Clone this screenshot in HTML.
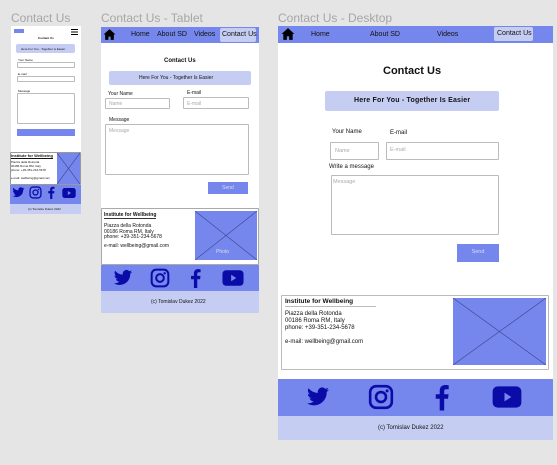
<!DOCTYPE html>
<html><head><meta charset="utf-8"><style>
*{margin:0;padding:0;box-sizing:border-box}
body{width:557px;height:465px;background:#e5e5e5;position:relative;overflow:hidden;font-family:"Liberation Sans",sans-serif;color:#111}
.a{position:absolute}
.w{background:#fff}
.blue{background:#7587ec}
.lb{background:#c6cdf3}
.t{white-space:nowrap}
.box{border:1px solid #bbb;background:#fff;border-radius:1px}
.ph{color:#aaa}
svg{position:absolute}
</style></head><body>
<svg width="0" height="0" style="position:absolute">
<symbol id="tw" viewBox="0 0 24 24"><path fill="#0b0ba8" d="M23 4.6c-.8.4-1.7.6-2.6.7.9-.6 1.6-1.4 2-2.5-.9.5-1.9.9-2.9 1.1A4.5 4.5 0 0 0 11.8 8 12.8 12.8 0 0 1 2.5 3.3a4.5 4.5 0 0 0 1.4 6 4.4 4.4 0 0 1-2-.6 4.5 4.5 0 0 0 3.6 4.5 4.5 4.5 0 0 1-2 .1 4.5 4.5 0 0 0 4.2 3.1A9 9 0 0 1 1 18.3a12.8 12.8 0 0 0 19.7-11.4c.9-.6 1.7-1.4 2.3-2.3z"/></symbol>
<symbol id="ig" viewBox="0 0 24 24"><rect x="2" y="2" width="20" height="20" rx="5.5" fill="none" stroke="#0b0ba8" stroke-width="2.4"/><circle cx="12" cy="12" r="4.6" fill="none" stroke="#0b0ba8" stroke-width="2.4"/><circle cx="17.6" cy="6.4" r="1.4" fill="#0b0ba8"/></symbol>
<symbol id="fb" viewBox="0 0 24 24"><path fill="#0b0ba8" d="M13.5 24V13.5h3.4l.5-4h-3.9V7c0-1.1.3-1.9 1.9-1.9h2.1V1.5c-.4 0-1.6-.2-3-.2-3 0-5 1.8-5 5.2v3H6v4h3.5V24z"/></symbol>
<symbol id="yt" viewBox="0 0 24 24"><rect x="0.5" y="3.5" width="23" height="17" rx="4" fill="#0b0ba8"/><path d="M10 8.5v7l5.5-3.5z" fill="#7587ec"/></symbol>
<symbol id="hm" viewBox="0 0 24 24"><path fill="#000" d="M12 2 1 12h3v10h6v-6h4v6h6V12h3z"/></symbol>
<symbol id="x" viewBox="0 0 100 100" preserveAspectRatio="none"><rect width="100" height="100" fill="#7587ec"/><path d="M0 0 100 100M100 0 0 100" stroke="#3a4390" stroke-width="0.6" vector-effect="non-scaling-stroke"/></symbol>
</svg>

<!-- Titles -->
<div class="a t" style="left:11px;top:11px;font-size:12px;color:#a6a6a6">Contact Us</div>
<div class="a t" style="left:101px;top:11px;font-size:12px;color:#a6a6a6">Contact Us - Tablet</div>
<div class="a t" style="left:278px;top:11px;font-size:12px;color:#a6a6a6">Contact Us - Desktop</div>

<!-- MOBILE -->
<div class="a w" style="left:11px;top:26px;width:70px;height:126px"></div>
<div class="a" style="left:14px;top:29px;width:10px;height:4px;background:#7587ec"></div>
<div class="a" style="left:71px;top:29px;width:7px;height:1px;background:#000;box-shadow:0 2.5px 0 #000,0 5px 0 #000"></div>
<div class="a t" style="left:38px;top:36px;font-size:3px;font-weight:bold">Contact Us</div>
<div class="a lb" style="left:16px;top:44px;width:59px;height:9px;border-radius:2px"></div>
<div class="a t" style="left:21px;top:47px;font-size:3px">Here For You - Together is Easier</div>
<div class="a t" style="left:18px;top:58px;font-size:3px">Your Name</div>
<div class="a box" style="left:17px;top:62px;width:58px;height:6px"></div>
<div class="a t" style="left:18px;top:72px;font-size:3px">E-mail</div>
<div class="a box" style="left:17px;top:76px;width:58px;height:6px"></div>
<div class="a t" style="left:18px;top:89px;font-size:3px">Message</div>
<div class="a box" style="left:17px;top:93px;width:58px;height:31px"></div>
<div class="a blue" style="left:17px;top:129px;width:58px;height:7px"></div>
<div class="a box" style="left:10px;top:152px;width:71px;height:33px;border-color:#999"></div>
<div class="a t" style="left:11px;top:153px;font-size:4px;font-weight:bold;text-decoration:underline">Institute for Wellbeing</div>
<div class="a" style="left:11px;top:160px;font-size:3px;line-height:4px">Piazza della Rotonda<br>00186 Roma RM, Italy<br>phone: +39-351-234-5678<br><br>e-mail: wellbeing@gmail.com</div>
<svg style="left:57px;top:153px" width="23" height="31"><use href="#x"/></svg>
<div class="a blue" style="left:10px;top:185px;width:71px;height:19px"></div>
<svg style="left:12px;top:186px" width="13" height="13"><use href="#tw"/></svg>
<svg style="left:29px;top:186px" width="13" height="13"><use href="#ig"/></svg>
<svg style="left:45px;top:186px" width="13" height="13"><use href="#fb"/></svg>
<svg style="left:62px;top:186px" width="14" height="14"><use href="#yt"/></svg>
<div class="a lb" style="left:10px;top:204px;width:71px;height:10px"></div>
<div class="a t" style="left:28px;top:207px;font-size:3px">(c) Tomislav Dukez 2022</div>

<!-- TABLET -->
<div class="a w" style="left:101px;top:27px;width:158px;height:181px"></div>
<div class="a blue" style="left:101px;top:27px;width:158px;height:16px"></div>
<svg style="left:103px;top:28px" width="13" height="13"><use href="#hm"/></svg>
<div class="a t" style="left:131px;top:31px;font-size:7px">Home</div>
<div class="a t" style="left:157px;top:31px;font-size:7px">About SD</div>
<div class="a t" style="left:194px;top:31px;font-size:7px">Videos</div>
<div class="a lb t" style="left:220px;top:28px;width:36px;height:14px;font-size:7px;padding:3px 0 0 2px;border-radius:2px">Contact Us</div>
<div class="a t" style="left:164px;top:58px;font-size:6px;font-weight:bold">Contact Us</div>
<div class="a lb" style="left:109px;top:71px;width:142px;height:14px;border-radius:2px"></div>
<div class="a t" style="left:139px;top:75px;font-size:5px">Here For You - Together Is Easier</div>
<div class="a t" style="left:108px;top:91px;font-size:5px">Your Name</div>
<div class="a t" style="left:187px;top:90px;font-size:5px">E-mail</div>
<div class="a box ph" style="left:105px;top:98px;width:65px;height:11px;font-size:5px;padding:2px 3px">Name</div>
<div class="a box ph" style="left:183px;top:97px;width:66px;height:12px;font-size:5px;padding:3px 3px">E-mail</div>
<div class="a t" style="left:109px;top:117px;font-size:5px">Message</div>
<div class="a box ph" style="left:105px;top:124px;width:144px;height:51px;font-size:5px;padding:3px">Message</div>
<div class="a blue t" style="left:208px;top:182px;width:40px;height:12px;font-size:5px;color:#dde;text-align:center;padding-top:3px">Send</div>
<div class="a box" style="left:101px;top:208px;width:158px;height:57px;border-color:#aaa"></div>
<div class="a t" style="left:104px;top:212px;font-size:5px;font-weight:bold;border-bottom:1px solid #333">Institute for Wellbeing</div>
<div class="a t" style="left:104px;top:224px;font-size:5px;line-height:5.5px">Piazza della Rotonda<br>00186 Roma RM, Italy<br>phone: +39-351-234-5678</div>
<div class="a t" style="left:104px;top:243px;font-size:5px">e-mail: wellbeing@gmail.com</div>
<svg style="left:195px;top:211px" width="62" height="49"><use href="#x"/></svg>
<div class="a t" style="left:216px;top:249px;font-size:5px;color:#dde">Photo</div>
<div class="a blue" style="left:101px;top:265px;width:158px;height:26px"></div>
<svg style="left:113px;top:268px" width="20" height="20"><use href="#tw"/></svg>
<svg style="left:150px;top:268px" width="20" height="20"><use href="#ig"/></svg>
<svg style="left:186px;top:268px" width="20" height="20"><use href="#fb"/></svg>
<svg style="left:222px;top:267px" width="22" height="22"><use href="#yt"/></svg>
<div class="a lb" style="left:101px;top:291px;width:158px;height:22px"></div>
<div class="a t" style="left:151px;top:299px;font-size:5px">(c) Tomislav Dukez 2022</div>

<!-- DESKTOP -->
<div class="a w" style="left:278px;top:26px;width:275px;height:354px"></div>
<div class="a blue" style="left:278px;top:26px;width:275px;height:17px"></div>
<svg style="left:281px;top:27px" width="14" height="14"><use href="#hm"/></svg>
<div class="a t" style="left:311px;top:31px;font-size:7px">Home</div>
<div class="a t" style="left:370px;top:31px;font-size:7px">About SD</div>
<div class="a t" style="left:437px;top:31px;font-size:7px">Videos</div>
<div class="a lb t" style="left:494px;top:27px;width:39px;height:14px;font-size:7px;padding:3px 0 0 3px;border-radius:2px">Contact Us</div>
<div class="a t" style="left:383px;top:65px;font-size:11px;font-weight:bold">Contact Us</div>
<div class="a lb" style="left:325px;top:91px;width:174px;height:20px;border-radius:2px"></div>
<div class="a t" style="left:354px;top:97px;font-size:7px;font-weight:bold;letter-spacing:0.2px">Here For You - Together Is Easier</div>
<div class="a t" style="left:332px;top:129px;font-size:6px">Your Name</div>
<div class="a t" style="left:390px;top:130px;font-size:6px">E-mail</div>
<div class="a box ph" style="left:330px;top:142px;width:49px;height:18px;font-size:5.5px;padding:5px 4px">Name</div>
<div class="a box ph" style="left:386px;top:142px;width:113px;height:18px;font-size:5.5px;padding:4px 3px">E-mail</div>
<div class="a t" style="left:329px;top:164px;font-size:6px">Write a message</div>
<div class="a box ph" style="left:331px;top:175px;width:168px;height:60px;font-size:5.5px;padding:3px 1px">Message</div>
<div class="a blue t" style="left:457px;top:244px;width:42px;height:18px;font-size:5.5px;color:#dde;text-align:center;padding-top:5px">Send</div>
<div class="a box" style="left:281px;top:295px;width:268px;height:75px;border-color:#bbb"></div>
<div class="a t" style="left:285px;top:298px;font-size:6.5px;font-weight:bold;border-bottom:1px solid #bbb;padding-bottom:1px;width:91px">Institute for Wellbeing</div>
<div class="a t" style="left:285px;top:311px;font-size:6px;line-height:7px">Piazza della Rotonda<br>00186 Roma RM, Italy<br>phone: +39-351-234-5678</div>
<div class="a t" style="left:285px;top:339px;font-size:6px">e-mail: wellbeing@gmail.com</div>
<svg style="left:453px;top:298px" width="93" height="67"><use href="#x"/></svg>
<div class="a blue" style="left:278px;top:379px;width:275px;height:37px"></div>
<svg style="left:306px;top:385px" width="24" height="24"><use href="#tw"/></svg>
<svg style="left:368px;top:384px" width="26" height="26"><use href="#ig"/></svg>
<svg style="left:429px;top:383px" width="27" height="28"><use href="#fb"/></svg>
<svg style="left:492px;top:382px" width="30" height="30"><use href="#yt"/></svg>
<div class="a lb" style="left:278px;top:416px;width:275px;height:24px"></div>
<div class="a t" style="left:378px;top:425px;font-size:6px">(c) Tomislav Dukez 2022</div>
</body></html>
